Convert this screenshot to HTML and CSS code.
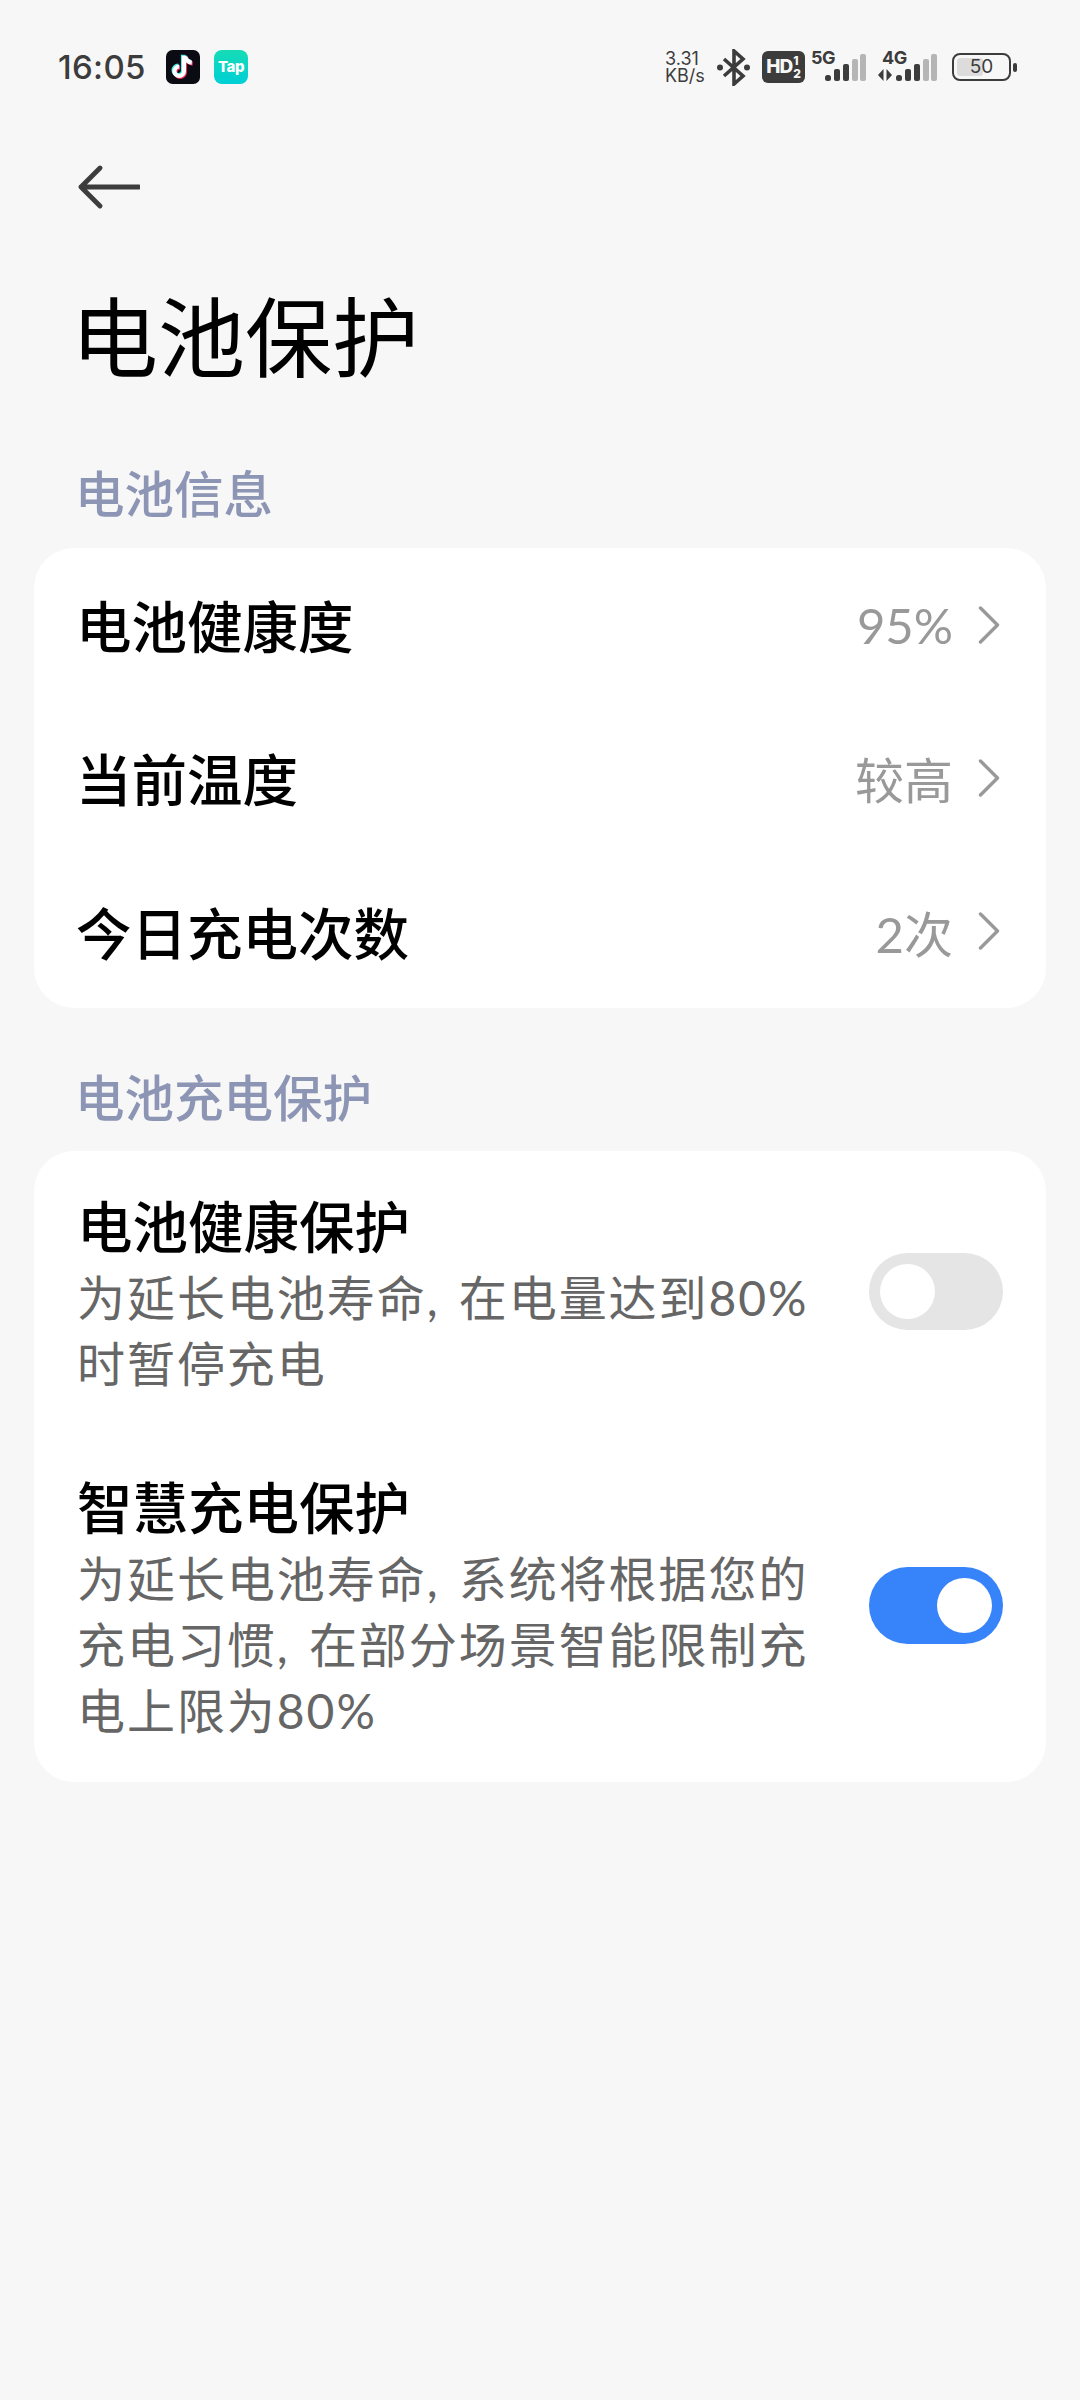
FILE: index.html
```html
<!DOCTYPE html>
<html lang="zh-CN">
<head>
<meta charset="utf-8">
<title>电池保护</title>
<link rel="stylesheet" href="styles.css">
</head>
<body>
<div class="status">
  <div class="status-left">
    <span class="time">16:05</span>
    <svg class="app" viewBox="0 0 36 36"><rect width="36" height="36" rx="7" fill="#0b0b14"/><g fill="none" stroke-width="4.400"><path d="M19 6v16.500a5 5 0 1 1-5-5M20.500 7c.6 4 3 6 6.800 6.400" stroke="#f2295b" transform="translate(1 1)"/><path d="M19 6v16.500a5 5 0 1 1-5-5M20.500 7c.6 4 3 6 6.800 6.400" stroke="#45e6e6" transform="translate(-1 -1)"/><path d="M19 6v16.500a5 5 0 1 1-5-5M20.500 7c.6 4 3 6 6.800 6.400" stroke="#fff"/></g></svg>
    <span class="tap">Tap</span>
  </div>
  <div class="status-right">
    <span class="speed"><span>3.31</span><span>KB/s</span></span>
    <svg class="bt" viewBox="0 0 33 37"><path d="M7 10l19 17-9 8V2l9 8L7 27" fill="none" stroke="#3c3c3c" stroke-width="3.600"/><circle cx="3" cy="18.500" r="3" fill="#3c3c3c"/><circle cx="30" cy="18.500" r="3" fill="#3c3c3c"/></svg>
    <span class="hd"><span>HD</span><span class="hd-nums"><i>1</i><i>2</i></span></span>
    <span class="net">
      <span class="net-label">5G</span>
      <svg class="bars" viewBox="0 0 41 27"><rect x="0" y="21" width="6" height="6" rx="2.500" fill="#3c3c3c"/><rect x="9" y="15" width="6" height="12" rx="2" fill="#3c3c3c"/><rect x="18" y="10" width="6" height="17" rx="2" fill="#3c3c3c"/><rect x="27" y="5" width="6" height="22" rx="2" fill="#b5b5b5"/><rect x="35" y="0" width="6" height="27" rx="2" fill="#b5b5b5"/></svg>
    </span>
    <span class="net net-4g">
      <span class="net-label net-label-4g">4G</span>
      <svg class="bars bars-wide" viewBox="0 0 59 27"><path d="M5.500 15v12L0 21zM8.500 15l5.500 6-5.500 6z" fill="#3c3c3c"/><rect x="18" y="21" width="6" height="6" rx="2.500" fill="#3c3c3c"/><rect x="27" y="15" width="6" height="12" rx="2" fill="#3c3c3c"/><rect x="36" y="10" width="6" height="17" rx="2" fill="#3c3c3c"/><rect x="45" y="5" width="6" height="22" rx="2" fill="#b5b5b5"/><rect x="53" y="0" width="6" height="27" rx="2" fill="#b5b5b5"/></svg>
    </span>
    <span class="battery"><span class="battery-body"><span class="battery-fill"></span><span class="battery-num">50</span></span><span class="battery-cap"></span></span>
  </div>
</div>

<div class="nav">
  <svg class="back" viewBox="0 0 62 44"><path d="M22 3L3 22l19 19M3 22h58" fill="none" stroke="#3d3d3d" stroke-width="4.800" stroke-linecap="round" stroke-linejoin="round"/></svg>
</div>

<h1 class="title">电池保护</h1>

<h2 class="section">电池信息</h2>
<section class="card card-info">
  <div class="row"><span class="row-name">电池健康度</span><span class="row-value">95%</span><svg class="chev" viewBox="0 0 22 38"><path d="M2.500 2l17 17-17 17" fill="none" stroke="#999" stroke-width="3.400" stroke-linecap="round" stroke-linejoin="round"/></svg></div>
  <div class="row"><span class="row-name">当前温度</span><span class="row-value">较高</span><svg class="chev" viewBox="0 0 22 38"><path d="M2.500 2l17 17-17 17" fill="none" stroke="#999" stroke-width="3.400" stroke-linecap="round" stroke-linejoin="round"/></svg></div>
  <div class="row"><span class="row-name">今日充电次数</span><span class="row-value">2次</span><svg class="chev" viewBox="0 0 22 38"><path d="M2.500 2l17 17-17 17" fill="none" stroke="#999" stroke-width="3.400" stroke-linecap="round" stroke-linejoin="round"/></svg></div>
</section>

<h2 class="section section-2">电池充电保护</h2>
<section class="card card-protect">
  <div class="option">
    <div class="option-text">
      <div class="row-name">电池健康保护</div>
      <p class="desc">为延长电池寿命, 在电量达到80%<br>时暂停充电</p>
    </div>
    <span class="switch"><span class="knob"></span></span>
  </div>
  <div class="option option-2">
    <div class="option-text">
      <div class="row-name">智慧充电保护</div>
      <p class="desc">为延长电池寿命, 系统将根据您的<br>充电习惯, 在部分场景智能限制充<br>电上限为80%</p>
    </div>
    <span class="switch on"><span class="knob"></span></span>
  </div>
</section>
</body>
</html>
```

FILE: styles.css
```css
* { box-sizing: border-box; }
html, body { margin: 0; padding: 0; }
body {
  width: 1080px;
  height: 2400px;
  background: #f7f7f7;
  font-family: "Noto Sans CJK SC", "Noto Sans", sans-serif;
  overflow: hidden;
}
.status {
  height: 100px;
  padding: 49px 63px 0 58px;
  display: flex;
  justify-content: space-between;
  align-items: flex-start;
}
.status-left { display: flex; align-items: center; gap: 14px; height: 36px; }
.time { font-family: "Inter", "Noto Sans", sans-serif; font-size: 33px; font-weight: 500; color: #3c3c3c; width: 94px; letter-spacing: .3px; }
.app { width: 34px; height: 34px; display: block; }
.tap {
  width: 34px; height: 34px; border-radius: 8px;
  background: linear-gradient(#15dcb6, #00cfd6);
  color: #fff; font: 800 15px/33px "Inter", sans-serif; text-align: center; letter-spacing: -.5px;
}
.status-right { display: flex; align-items: center; height: 36px; }
.speed { display: flex; flex-direction: column; font: 400 18px/17px "Inter", sans-serif; color: #3c3c3c; width: 41px; white-space: nowrap; }
.bt { width: 33px; height: 37px; margin-left: 11px; }
.hd {
  width: 43px; height: 32px; margin-left: 12px; border-radius: 6px; background: #3c3c3c;
  color: #f7f7f7; font: 800 19px/32px "Inter", sans-serif; display: flex; justify-content: center; gap: 1px; letter-spacing: -1px;
}
.hd-nums { display: flex; flex-direction: column; font-size: 12px; line-height: 13px; padding-top: 3px; letter-spacing: 0; }
.hd-nums i { font-style: normal; }
.net { position: relative; display: block; width: 55px; height: 36px; margin-left: 6px; }
.net-4g { width: 59px; margin-left: 12px; }
.net-label { position: absolute; left: 0; top: 2px; font: 700 18px/14px "Inter", sans-serif; color: #3c3c3c; letter-spacing: -.5px; }
.net-label-4g { left: 4px; }
.bars { position: absolute; right: 0; bottom: 4px; width: 41px; height: 27px; }
.bars-wide { width: 59px; }
.battery { display: flex; align-items: center; gap: 2px; margin-left: 15px; }
.battery-body { position: relative; width: 59px; height: 28px; border: 2.500px solid #3c3c3c; border-radius: 8px; display: block; }
.battery-fill { position: absolute; left: 3px; top: 3px; bottom: 3px; width: 26px; border-radius: 3px; background: #dcdcdc; }
.battery-num { position: absolute; inset: 0; text-align: center; font: 400 19px/23px "Inter", sans-serif; color: #3c3c3c; }
.battery-cap { width: 4px; height: 9px; border-radius: 2px; background: #3c3c3c; }

.nav { height: 166px; padding: 65px 0 0 78px; }
.back { display: block; width: 62px; height: 44px; }
.title {
  margin: 0 0 61px; padding-left: 71px; height: 136px;
  font-size: 87px; line-height: 134px; font-weight: 400; color: #000;
}
.section {
  margin: 0; padding-left: 75px; height: 60px;
  font-size: 49.500px; line-height: 58px; font-weight: 500; color: #8d95b5;
}
.section-2 { margin-top: 59px; }
.card { margin: 25px 34px 0; background: #fff; border-radius: 40px; }
.card-info { height: 460px; }
.row { height: 153.300px; display: flex; align-items: center; padding: 0 46px 0 42px; }
.row-name { font-size: 55.500px; line-height: 67px; font-weight: 500; color: #000; }
.row-value { margin-left: auto; font-size: 49px; color: #999; font-family: "Lato", "Noto Sans CJK SC", sans-serif; }
.chev { width: 22px; height: 38px; margin-left: 25px; }
.card-protect { margin-top: 24px; height: 631px; padding-top: 40px; }
.option { display: flex; align-items: center; padding: 0 43px 0 43px; }
.option-2 { margin-top: 75px; }
.option-text { width: 760px; }
.desc { margin: 7px 0 0; font-family: "Lato", "Noto Sans CJK SC", sans-serif; font-size: 48px; letter-spacing: 1.950px; word-spacing: 5px; line-height: 66px; color: #666; white-space: nowrap; }
.switch { width: 134px; height: 77px; margin-left: auto; margin-bottom: 5px; border-radius: 39px; background: #e5e5e5; padding: 11px; display: block; }
.switch.on { background: #3783fa; padding-left: 68px; }
.knob { display: block; width: 55px; height: 55px; border-radius: 50%; background: #fff; }
```
